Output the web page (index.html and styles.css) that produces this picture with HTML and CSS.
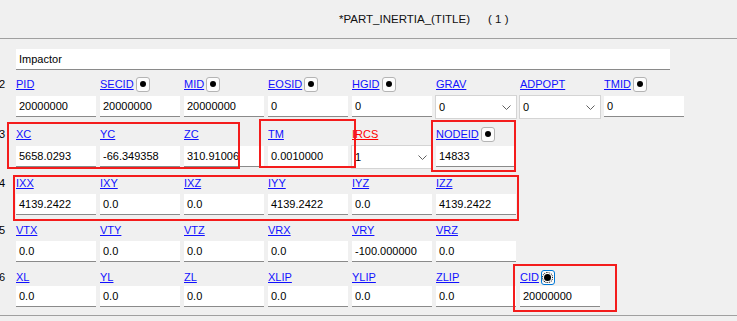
FILE: index.html
```html
<!DOCTYPE html>
<html>
<head>
<meta charset="utf-8">
<link rel="stylesheet" href="styles.css">
</head>
<body>
<div class="page">
  <header class="head">
    <span class="title">*PART_INERTIA_(TITLE)</span><span class="count">( 1 )</span>
  </header>
  <div class="form">
    <div class="tinp">Impactor</div>

    <div class="row r2">
      <div class="num">2</div>
      <div class="field"><div class="lbl"><a>PID</a></div><div class="inp">20000000</div></div>
      <div class="field"><div class="lbl"><a>SECID</a><span class="pick"></span></div><div class="inp">20000000</div></div>
      <div class="field"><div class="lbl"><a>MID</a><span class="pick"></span></div><div class="inp">20000000</div></div>
      <div class="field"><div class="lbl"><a>EOSID</a><span class="pick"></span></div><div class="inp">0</div></div>
      <div class="field"><div class="lbl"><a>HGID</a><span class="pick"></span></div><div class="inp">0</div></div>
      <div class="field"><div class="lbl"><a>GRAV</a></div><div class="sel">0<svg class="chev" width="9" height="5" viewBox="0 0 9 5"><polyline points="0.5,0.5 4.5,4.5 8.5,0.5" fill="none" stroke="#606060" stroke-width="1"/></svg></div></div>
      <div class="field"><div class="lbl"><a>ADPOPT</a></div><div class="sel">0<svg class="chev" width="9" height="5" viewBox="0 0 9 5"><polyline points="0.5,0.5 4.5,4.5 8.5,0.5" fill="none" stroke="#606060" stroke-width="1"/></svg></div></div>
      <div class="field"><div class="lbl"><a>TMID</a><span class="pick"></span></div><div class="inp">0</div></div>
    </div>

    <div class="row r3">
      <div class="num">3</div>
      <div class="field"><div class="lbl"><a>XC</a></div><div class="inp">5658.0293</div></div>
      <div class="field"><div class="lbl"><a>YC</a></div><div class="inp">-66.349358</div></div>
      <div class="field"><div class="lbl"><a>ZC</a></div><div class="inp">310.91006</div></div>
      <div class="field"><div class="lbl"><a>TM</a></div><div class="inp">0.0010000</div></div>
      <div class="field"><div class="lbl"><a class="req">IRCS</a></div><div class="sel">1<svg class="chev" width="9" height="5" viewBox="0 0 9 5"><polyline points="0.5,0.5 4.5,4.5 8.5,0.5" fill="none" stroke="#606060" stroke-width="1"/></svg></div></div>
      <div class="field"><div class="lbl"><a>NODEID</a><span class="pick"></span></div><div class="inp">14833</div></div>
    </div>

    <div class="row r4">
      <div class="num">4</div>
      <div class="field"><div class="lbl"><a>IXX</a></div><div class="inp">4139.2422</div></div>
      <div class="field"><div class="lbl"><a>IXY</a></div><div class="inp">0.0</div></div>
      <div class="field"><div class="lbl"><a>IXZ</a></div><div class="inp">0.0</div></div>
      <div class="field"><div class="lbl"><a>IYY</a></div><div class="inp">4139.2422</div></div>
      <div class="field"><div class="lbl"><a>IYZ</a></div><div class="inp">0.0</div></div>
      <div class="field"><div class="lbl"><a>IZZ</a></div><div class="inp">4139.2422</div></div>
    </div>

    <div class="row r5">
      <div class="num">5</div>
      <div class="field"><div class="lbl"><a>VTX</a></div><div class="inp">0.0</div></div>
      <div class="field"><div class="lbl"><a>VTY</a></div><div class="inp">0.0</div></div>
      <div class="field"><div class="lbl"><a>VTZ</a></div><div class="inp">0.0</div></div>
      <div class="field"><div class="lbl"><a>VRX</a></div><div class="inp">0.0</div></div>
      <div class="field"><div class="lbl"><a>VRY</a></div><div class="inp">-100.000000</div></div>
      <div class="field"><div class="lbl"><a>VRZ</a></div><div class="inp">0.0</div></div>
    </div>

    <div class="row r6">
      <div class="num">6</div>
      <div class="field"><div class="lbl"><a>XL</a></div><div class="inp">0.0</div></div>
      <div class="field"><div class="lbl"><a>YL</a></div><div class="inp">0.0</div></div>
      <div class="field"><div class="lbl"><a>ZL</a></div><div class="inp">0.0</div></div>
      <div class="field"><div class="lbl"><a>XLIP</a></div><div class="inp">0.0</div></div>
      <div class="field"><div class="lbl"><a>YLIP</a></div><div class="inp">0.0</div></div>
      <div class="field"><div class="lbl"><a>ZLIP</a></div><div class="inp">0.0</div></div>
      <div class="field"><div class="lbl"><a>CID</a><span class="pick focus"></span></div><div class="inp">20000000</div></div>
    </div>
  </div>
  <div class="foot"></div>

  <div class="mark ma"></div>
  <div class="mark mb"></div>
  <div class="mark mc"></div>
  <div class="mark md"></div>
  <div class="mark me"></div>
</div>
</body>
</html>
```
FILE: styles.css
```css
* { box-sizing: border-box; }
html, body { margin: 0; padding: 0; }
body {
  background: #f0f0f0;
  font-family: "Liberation Sans", Arial, sans-serif;
  font-size: 11px;
  color: #000;
}
.page {
  position: relative;
  width: 737px;
  height: 321px;
  overflow: hidden;
}
.head {
  height: 39px;
  border-bottom: 1px solid #a0a0a0;
  padding: 11px 0 0 339px;
  font-size: 11.5px;
  line-height: 16px;
  display: flex;
  color: #111;
}
.count { margin-left: 18px; }
.form {
  padding: 10px 0 0 0;
  height: 277px;
  border-bottom: 1px solid #a0a0a0;
}
.tinp {
  margin-left: 16px;
  width: 654px;
  height: 21px;
  background: #fff;
  border-bottom: 1px solid #8a8a8a;
  padding: 0 3px;
  line-height: 20px;
  margin-bottom: 6px;
}
.row {
  display: flex;
  height: 47px;
}
.r2 { height: 50px; }
.r3 { height: 49px; }
.num {
  width: 16px;
  text-indent: -1px;
  line-height: 16px;
}
.field {
  width: 80px;
  margin-right: 4px;
  display: flex;
  flex-direction: column;
}
.lbl {
  height: 16px;
  display: flex;
  align-items: center;
  line-height: 16px;
}
.lbl a {
  color: #1010ff;
  text-decoration: underline;
}
.lbl a.req { color: #ff0000; }
.pick {
  width: 14px;
  height: 15px;
  margin-left: 2px;
  border: 1px solid #b4b4b4;
  border-radius: 3px;
  background: #fcfcfc;
  display: flex;
  align-items: center;
  justify-content: center;
}
.pick::after {
  content: "";
  width: 6px;
  height: 6px;
  border-radius: 50%;
  background: #000;
}
.pick.focus {
  border-color: #0078d7;
}
.pick.focus::after {
  width: 7px;
  height: 7px;
  outline: 1px dotted #000;
  outline-offset: 1px;
}
.inp {
  height: 21px;
  background: #fff;
  border-bottom: 1px solid #8a8a8a;
  padding: 0 3px;
  line-height: 20px;
  margin-top: 3px;
  white-space: nowrap;
  overflow: hidden;
}
.r2 .inp, .r3 .inp { margin-top: 4px; }
.r6 .inp { margin-top: 1px; }
.sel {
  position: relative;
  height: 24px;
  margin-top: 3px;
  margin-left: -1px;
  width: 82px;
  background: #fff;
  border: 1px solid #d4d4d4;
  padding: 0 3px;
  line-height: 22px;
}
.chev {
  position: absolute;
  right: 5px;
  top: 9px;
}
.mark {
  position: absolute;
  border: 2px solid #f41c1c;
}
.ma { left: 7px; top: 122px; width: 233px; height: 47px; }
.mb { left: 259px; top: 119px; width: 97px; height: 49px; }
.mc { left: 431px; top: 120px; width: 85px; height: 52px; }
.md { left: 13px; top: 175px; width: 506px; height: 46px; }
.me { left: 513px; top: 264px; width: 104px; height: 48px; }
```
